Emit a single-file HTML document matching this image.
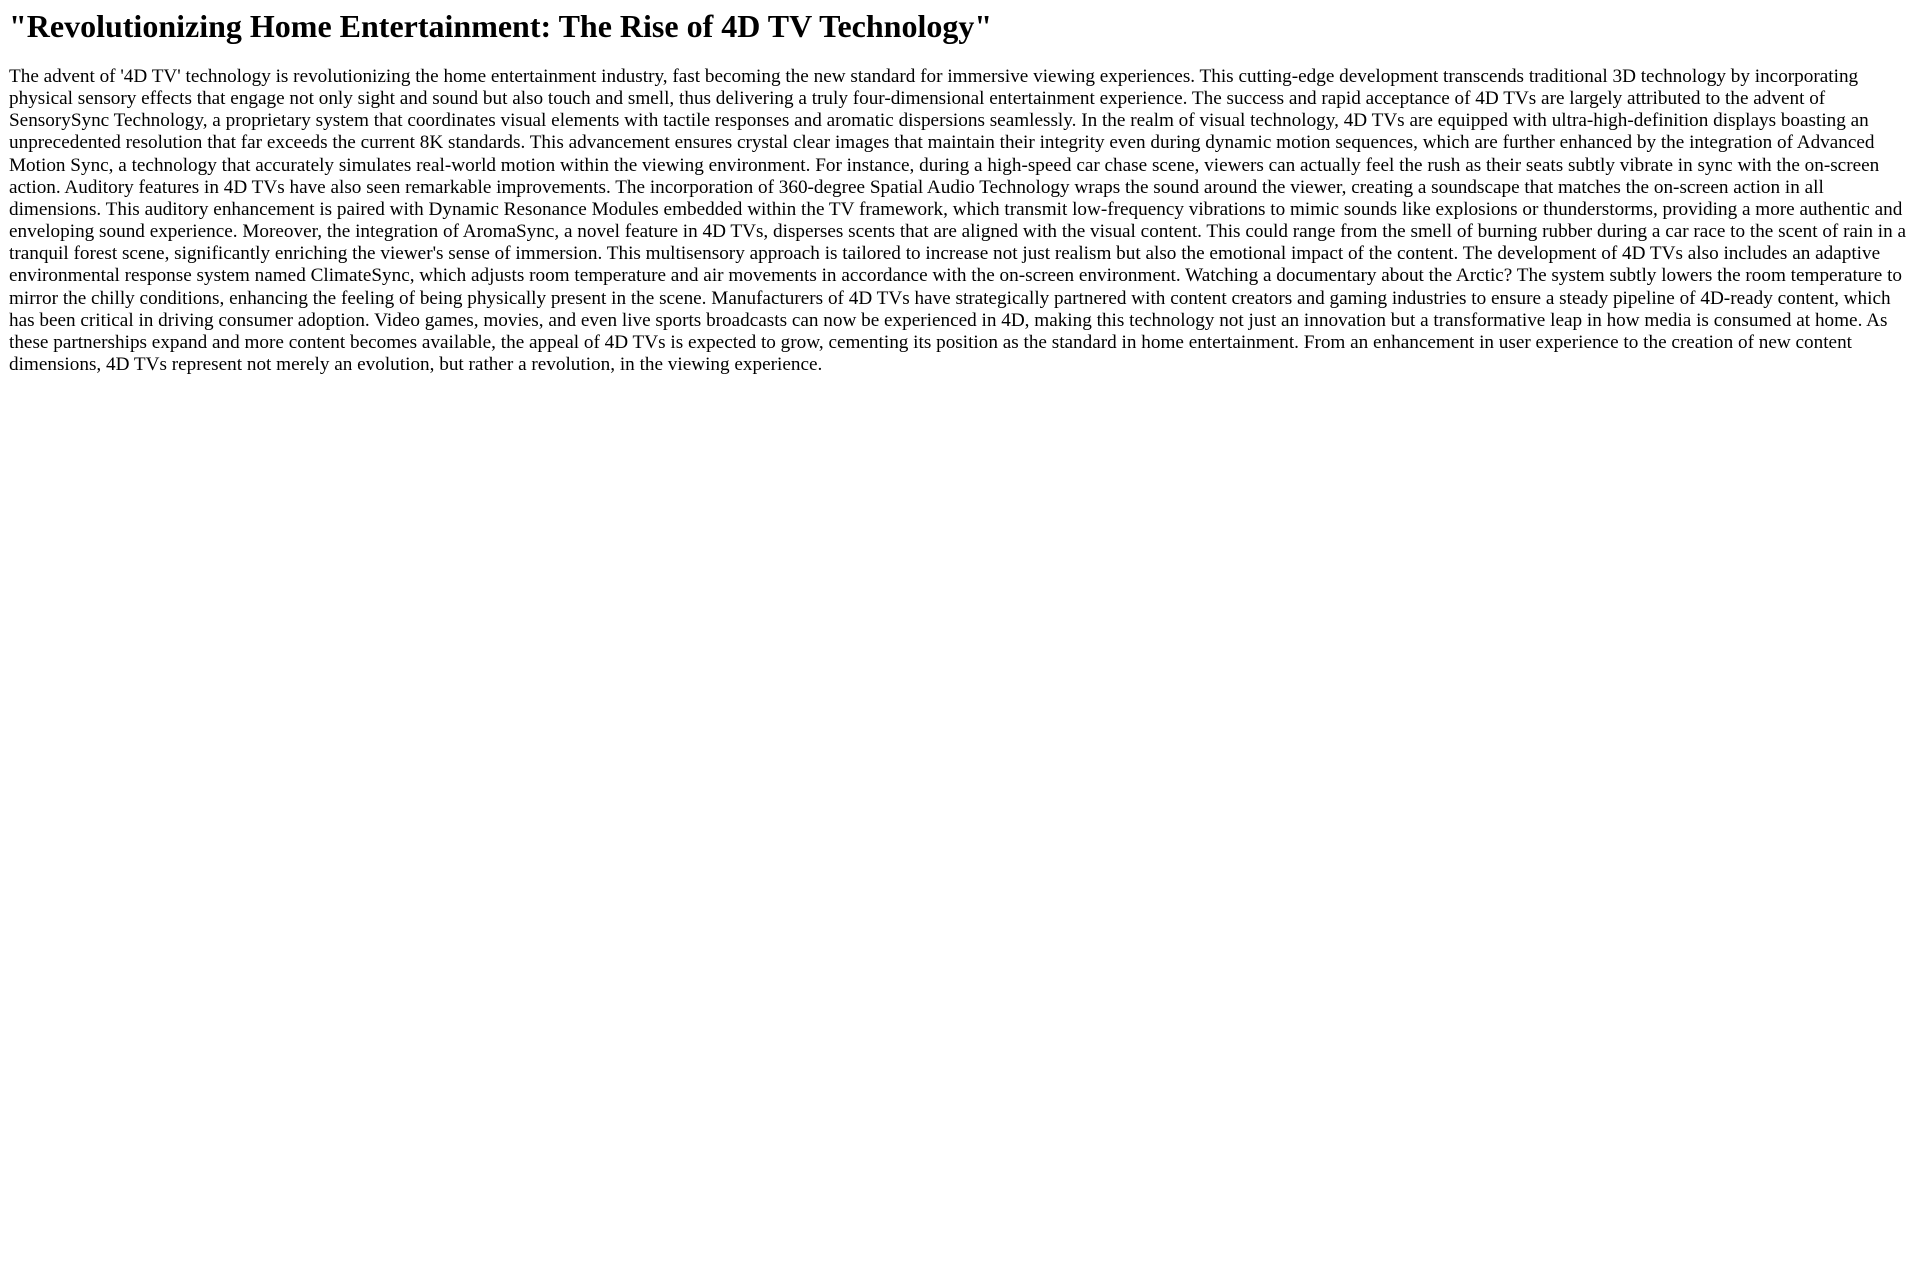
<!DOCTYPE html>
<html><head><meta charset="utf-8"><style>
body{margin:8px 8px 8px 9px;font-family:"Liberation Serif",serif;font-size:16px;color:#000;background:#fff}
h1{font-size:32px;margin:8px 0 21px 0;line-height:37px}
p{margin:16px 0;font-size:19.2px;line-height:22.15px}
</style></head><body>
<h1>"Revolutionizing Home Entertainment: The Rise of 4D TV Technology"</h1>
<p>The advent of '4D TV' technology is revolutionizing the home entertainment industry, fast becoming the new standard for immersive viewing experiences. This cutting-edge development transcends traditional 3D technology by incorporating physical sensory effects that engage not only sight and sound but also touch and smell, thus delivering a truly four-dimensional entertainment experience. The success and rapid acceptance of 4D TVs are largely attributed to the advent of SensorySync Technology, a proprietary system that coordinates visual elements with tactile responses and aromatic dispersions seamlessly. In the realm of visual technology, 4D TVs are equipped with ultra-high-definition displays boasting an unprecedented resolution that far exceeds the current 8K standards. This advancement ensures crystal clear images that maintain their integrity even during dynamic motion sequences, which are further enhanced by the integration of Advanced Motion Sync, a technology that accurately simulates real-world motion within the viewing environment. For instance, during a high-speed car chase scene, viewers can actually feel the rush as their seats subtly vibrate in sync with the on-screen action. Auditory features in 4D TVs have also seen remarkable improvements. The incorporation of 360-degree Spatial Audio Technology wraps the sound around the viewer, creating a soundscape that matches the on-screen action in all dimensions. This auditory enhancement is paired with Dynamic Resonance Modules embedded within the TV framework, which transmit low-frequency vibrations to mimic sounds like explosions or thunderstorms, providing a more authentic and enveloping sound experience. Moreover, the integration of AromaSync, a novel feature in 4D TVs, disperses scents that are aligned with the visual content. This could range from the smell of burning rubber during a car race to the scent of rain in a tranquil forest scene, significantly enriching the viewer's sense of immersion. This multisensory approach is tailored to increase not just realism but also the emotional impact of the content. The development of 4D TVs also includes an adaptive environmental response system named ClimateSync, which adjusts room temperature and air movements in accordance with the on-screen environment. Watching a documentary about the Arctic? The system subtly lowers the room temperature to mirror the chilly conditions, enhancing the feeling of being physically present in the scene. Manufacturers of 4D TVs have strategically partnered with content creators and gaming industries to ensure a steady pipeline of 4D-ready content, which has been critical in driving consumer adoption. Video games, movies, and even live sports broadcasts can now be experienced in 4D, making this technology not just an innovation but a transformative leap in how media is consumed at home. As these partnerships expand and more content becomes available, the appeal of 4D TVs is expected to grow, cementing its position as the standard in home entertainment. From an enhancement in user experience to the creation of new content dimensions, 4D TVs represent not merely an evolution, but rather a revolution, in the viewing experience.</p>
</body></html>
